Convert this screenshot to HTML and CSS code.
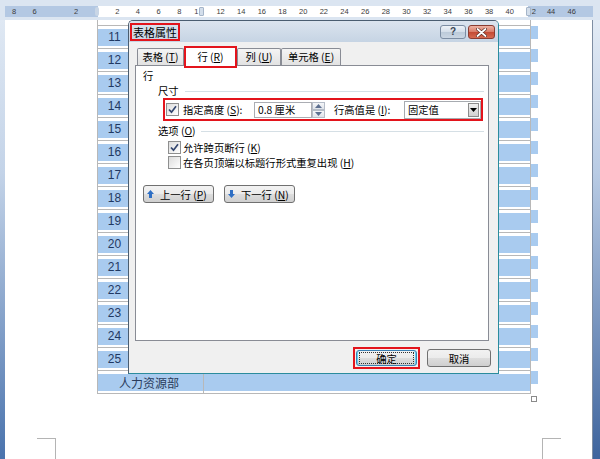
FILE: index.html
```html
<!DOCTYPE html>
<html lang="zh-CN">
<head>
<meta charset="utf-8">
<title>表格属性</title>
<link rel="stylesheet" href="styles.css">
</head>
<body>
<div class="screen">
  <div class="topbar">
    <div class="ruler">
      <span class="rn first">8</span><span class="rn">6</span><span class="rn"></span><span class="rn">2</span><span class="rn"><i class="cap"></i></span><span class="rn">2</span><span class="rn">4</span><span class="rn">6</span><span class="rn">8</span><span class="rn">1<i class="tick"></i></span><span class="rn">12</span><span class="rn">14</span><span class="rn">16</span><span class="rn">18</span><span class="rn">20</span><span class="rn">22</span><span class="rn">24</span><span class="rn">26</span><span class="rn">28</span><span class="rn">30</span><span class="rn">32</span><span class="rn">34</span><span class="rn">36</span><span class="rn">38</span><span class="rn">40</span><span class="rn"><i class="tick"></i>2</span><span class="rn">44</span><span class="rn">46</span>
    </div>
  </div>
  <div class="work">
    <div class="side side-l"></div>
    <div class="page">
      <div class="tbl">
        <div class="spacer"></div>
        <div class="row"><div class="cell c-num"><span class="band">11</span></div><div class="cell c-rest"><span class="band"></span></div><span class="eol"></span></div>
        <div class="row"><div class="cell c-num"><span class="band">12</span></div><div class="cell c-rest"><span class="band"></span></div><span class="eol"></span></div>
        <div class="row"><div class="cell c-num"><span class="band">13</span></div><div class="cell c-rest"><span class="band"></span></div><span class="eol"></span></div>
        <div class="row"><div class="cell c-num"><span class="band">14</span></div><div class="cell c-rest"><span class="band"></span></div><span class="eol"></span></div>
        <div class="row"><div class="cell c-num"><span class="band">15</span></div><div class="cell c-rest"><span class="band"></span></div><span class="eol"></span></div>
        <div class="row"><div class="cell c-num"><span class="band">16</span></div><div class="cell c-rest"><span class="band"></span></div><span class="eol"></span></div>
        <div class="row"><div class="cell c-num"><span class="band">17</span></div><div class="cell c-rest"><span class="band"></span></div><span class="eol"></span></div>
        <div class="row"><div class="cell c-num"><span class="band">18</span></div><div class="cell c-rest"><span class="band"></span></div><span class="eol"></span></div>
        <div class="row"><div class="cell c-num"><span class="band">19</span></div><div class="cell c-rest"><span class="band"></span></div><span class="eol"></span></div>
        <div class="row"><div class="cell c-num"><span class="band">20</span></div><div class="cell c-rest"><span class="band"></span></div><span class="eol"></span></div>
        <div class="row"><div class="cell c-num"><span class="band">21</span></div><div class="cell c-rest"><span class="band"></span></div><span class="eol"></span></div>
        <div class="row"><div class="cell c-num"><span class="band">22</span></div><div class="cell c-rest"><span class="band"></span></div><span class="eol"></span></div>
        <div class="row"><div class="cell c-num"><span class="band">23</span></div><div class="cell c-rest"><span class="band"></span></div><span class="eol"></span></div>
        <div class="row"><div class="cell c-num"><span class="band">24</span></div><div class="cell c-rest"><span class="band"></span></div><span class="eol"></span></div>
        <div class="row"><div class="cell c-num"><span class="band">25</span></div><div class="cell c-rest"><span class="band"></span></div><span class="eol"></span></div>
        <div class="row row-last"><div class="cell c-dept"><span class="band dept">人力资源部</span></div><div class="cell c-dept-rest"><span class="band"></span></div><span class="eol"></span></div>
      </div>
      <div class="marks"><span class="mark mark-l"></span><span class="mark mark-r"></span></div>
      <span class="handle"></span>
    </div>
    <div class="side side-r"></div>
  </div>

  <div class="dialog">
    <div class="titlebar">
      <span class="title">表格属性</span>
      <span class="tb-btns">
        <span class="tb-help">?</span>
        <span class="tb-close"><svg width="11" height="9" viewBox="0 0 11 9"><path d="M1.5 1 L9.5 8 M9.5 1 L1.5 8" stroke="#5a2a22" stroke-width="3.2" stroke-linecap="round"/><path d="M1.5 1 L9.5 8 M9.5 1 L1.5 8" stroke="#ffffff" stroke-width="1.8" stroke-linecap="round"/></svg></span>
      </span>
    </div>
    <div class="client">
      <div class="tabs">
        <span class="tab t1">表格 (<u>T</u>)</span>
        <span class="tab tab-sel">行 (<u>R</u>)</span>
        <span class="tab t3">列 (<u>U</u>)</span>
        <span class="tab t4">单元格 (<u>E</u>)</span>
      </div>
      <div class="panel">
        <div class="p-head">行</div>
        <div class="group"><span>尺寸</span><i class="rule"></i></div>
        <div class="size-row">
          <span class="chk on"><svg width="11" height="11" viewBox="0 0 11 11"><path d="M2 5.5 L4.5 8.2 L9 2.3" fill="none" stroke="#33466f" stroke-width="1.7"/></svg></span>
          <span class="lbl">指定高度 (<u>S</u>):</span>
          <span class="input">0.8 厘米</span>
          <span class="spin"><span class="sp"><svg width="7" height="4" viewBox="0 0 7 4"><path d="M0 4 L3.5 0 L7 4 Z" fill="#5c6f90"/></svg></span><span class="sp"><svg width="7" height="4" viewBox="0 0 7 4"><path d="M0 0 L3.5 4 L7 0 Z" fill="#5c6f90"/></svg></span></span>
          <span class="lbl2">行高值是 (<u>I</u>):</span>
          <span class="select"><span class="sel-text">固定值</span><span class="drop"><svg width="7" height="4" viewBox="0 0 7 4"><path d="M0 0 L3.5 4 L7 0 Z" fill="#000"/></svg></span></span>
        </div>
        <div class="group g2"><span>选项 (<u>O</u>)</span><i class="rule"></i></div>
        <div class="opt o1"><span class="chk on"><svg width="11" height="11" viewBox="0 0 11 11"><path d="M2 5.5 L4.5 8.2 L9 2.3" fill="none" stroke="#33466f" stroke-width="1.7"/></svg></span><span>允许跨页断行 (<u>K</u>)</span></div>
        <div class="opt"><span class="chk"></span><span>在各页顶端以标题行形式重复出现 (<u>H</u>)</span></div>
        <div class="nav">
          <span class="btn nav-btn"><svg width="7" height="8" viewBox="0 0 7 8"><path d="M3.5 0 L7 4 L5 4 L5 8 L2 8 L2 4 L0 4 Z" fill="#2f6fc4"/></svg><span>上一行 (<u>P</u>)</span></span>
          <span class="btn nav-btn"><svg width="7" height="8" viewBox="0 0 7 8"><path d="M3.5 8 L7 4 L5 4 L5 0 L2 0 L2 4 L0 4 Z" fill="#2f6fc4"/></svg><span>下一行 (<u>N</u>)</span></span>
        </div>
      </div>
      <div class="actions">
        <span class="ok-box"><span class="btn btn-ok"><span class="focus">确定</span></span></span>
        <span class="btn btn-cancel">取消</span>
      </div>
    </div>
  </div>
</div>
</body>
</html>
```

FILE: styles.css
```css
* { box-sizing: border-box; }
body {
  margin: 0;
  width: 600px;
  height: 459px;
  overflow: hidden;
  font-family: "Noto Sans CJK SC", "Noto Sans", sans-serif;
}
.screen {
  position: relative;
  width: 600px;
  height: 459px;
  overflow: hidden;
  background: #fff;
}

/* ruler */
.topbar {
  height: 20px;
  padding-top: 6px;
  background: #dbe5f1;
}
.ruler {
  display: flex;
  margin-left: 5px;
  width: 588px;
  height: 11px;
  background: linear-gradient(to right, #b3c8e3 0, #b3c8e3 93px, #ffffff 93px, #ffffff 523px, #b3c8e3 523px);
}
.rn {
  flex: 0 0 20.67px;
  text-align: center;
  font-family: "Liberation Sans", sans-serif;
  font-size: 7.5px;
  line-height: 11px;
  color: #3c3c3c;
  white-space: nowrap;
}
.rn.first { margin-left: -1.33px; }
.tick {
  display: inline-block;
  width: 5px;
  height: 9px;
  margin: 0 1px;
  vertical-align: -2px;
  background: #d3deeb;
  border: 1px solid #a5b5c9;
  border-radius: 1px;
}
.cap {
  display: inline-block;
  width: 4px;
  height: 9px;
  vertical-align: -2px;
  background: #c9d6e6;
  border-radius: 2px;
}

/* workspace */
.work {
  display: flex;
  height: 439px;
}
.side-l {
  width: 5px;
  background: linear-gradient(#dfe8f3 0%, #c3d3e8 35%, #4a73ad 100%);
}
.side-r {
  width: 8px;
  border-left: 1px solid #7f8ea3;
  background: linear-gradient(#e3ebf5 0%, #b8cbe4 35%, #3e649d 100%);
}
.page {
  position: relative;
  width: 587px;
  background: #fff;
}

/* table */
.tbl {
  margin-left: 92px;
  width: 441px;
  border-left: 1px solid #b8b8b8;
}
.tbl .spacer {
  height: 5px;
  width: 433px;
  border-right: 1px solid #b8b8b8;
}
.row {
  display: flex;
  height: 23px;
}
.cell {
  height: 23px;
  border-top: 1px solid #b8b8b8;
  border-right: 1px solid #b8b8b8;
  padding-top: 3px;
}
.band {
  display: block;
  height: 17px;
  background: #a9cbef;
  text-align: center;
  font-family: "Liberation Sans", sans-serif;
  font-size: 12px;
  line-height: 17px;
  color: #1f3862;
}
.band.dept {
  font-family: "Noto Sans CJK SC", sans-serif;
  font-size: 12px;
  color: #2a3c5c;
  padding-right: 3px;
}
.c-num { width: 34px; }
.c-rest { width: 399px; }
.c-dept { width: 106px; }
.c-dept-rest { width: 327px; }
.eol {
  width: 7px;
  height: 13px;
  margin-top: 1px;
  background: #a9cbef;
}
.row-last { height: 24px; }
.row-last .cell {
  height: 24px;
  border-bottom: 1px solid #b8b8b8;
}

/* page corner marks */
.marks {
  display: flex;
  margin-top: 44px;
  padding-left: 32px;
}
.mark {
  width: 19px;
  height: 22px;
  border-top: 1px solid #b4b4b4;
}
.mark-l { border-right: 1px solid #b4b4b4; }
.mark-r { margin-left: 486px; border-left: 1px solid #b4b4b4; }
.handle {
  position: absolute;
  left: 526px;
  top: 376px;
  width: 6px;
  height: 6px;
  border: 1px solid #8a8a8a;
  background: #fff;
}

/* dialog */
.dialog {
  position: absolute;
  left: 128px;
  top: 20px;
  width: 371px;
  height: 354px;
  border: 1px solid #4a5d70;
  border-right-color: #2b8c9d;
  border-bottom-color: #2b8c9d;
  border-radius: 5px 5px 0 0;
  background: #f0f0f0;
  font-size: 10.3px;
  color: #000;
}
.titlebar {
  display: flex;
  align-items: center;
  justify-content: space-between;
  height: 21px;
  padding: 0 3px 0 1px;
  background: linear-gradient(#dbe4ee, #c6d4e4);
  border-radius: 4px 4px 0 0;
}
.title {
  height: 18px;
  padding: 0 1px;
  border: 2px solid #e3141c;
  font-size: 11px;
  line-height: 14px;
  color: #000;
}
.tb-btns {
  display: flex;
  gap: 2px;
  margin-top: 1px;
}
.tb-help, .tb-close {
  display: flex;
  align-items: center;
  justify-content: center;
  height: 14px;
  border-radius: 3px;
}
.tb-help {
  width: 26px;
  border: 1px solid #7c8da3;
  background: linear-gradient(#eef3f8 0%, #d3dde9 50%, #bccad9 51%, #cad6e3 100%);
  font-family: "Liberation Sans", sans-serif;
  font-weight: bold;
  font-size: 10px;
  line-height: 12px;
  color: #3a4656;
}
.tb-close {
  width: 27px;
  border: 1px solid #8a3d32;
  background: linear-gradient(#eeb3a5 0%, #d87a66 50%, #c34a33 51%, #d66a50 100%);
}
.client {
  padding: 4px 0 0 6px;
}
.tabs {
  display: flex;
  align-items: flex-end;
  height: 19px;
  margin-left: 2px;
}
.tab {
  height: 17px;
  border: 1px solid #898c95;
  border-bottom: none;
  border-radius: 2px 2px 0 0;
  background: linear-gradient(#f4f4f4, #e2e2e2);
  text-align: center;
  line-height: 15px;
  white-space: nowrap;
}
.t1 { width: 47px; }
.t3 { width: 44px; }
.t4 { width: 60px; }
.tab-sel {
  position: relative;
  z-index: 1;
  width: 53px;
  height: 22px;
  margin-bottom: -3px;
  border: 2px solid #e3141c;
  border-radius: 0;
  background: #fff;
  line-height: 17px;
}
.panel {
  height: 276px;
  margin-right: 9px;
  border: 1px solid #898c95;
  background: #fff;
}
.p-head {
  margin-top: 3px;
  padding-left: 7px;
  line-height: 13px;
}
.group {
  display: flex;
  align-items: center;
  height: 14px;
  margin: 2px 4px 0 22px;
  line-height: 14px;
}
.group .rule {
  flex: 1;
  margin-left: 6px;
  border-top: 1px solid #d5dfe5;
}
.g2 { margin-top: 3px; }
.g2 .rule { margin-left: 5px; }
.size-row {
  display: flex;
  align-items: center;
  width: 320px;
  height: 23px;
  margin-left: 27px;
  border: 2px solid #e3141c;
}
.chk {
  display: inline-flex;
  align-items: center;
  justify-content: center;
  width: 13px;
  height: 13px;
  flex: 0 0 13px;
  border: 1px solid #8e8f8f;
  background: linear-gradient(135deg, #dcdcdc, #ffffff);
}
.size-row .chk { margin-left: 1px; }
.lbl {
  width: 71px;
  margin-left: 4px;
  white-space: nowrap;
}
.input {
  width: 58px;
  height: 16px;
  padding-left: 3px;
  border: 1px solid #abadb3;
  background: #fff;
  line-height: 14px;
  white-space: nowrap;
}
.spin {
  display: flex;
  flex-direction: column;
  width: 13px;
  height: 16px;
}
.sp {
  display: flex;
  align-items: center;
  justify-content: center;
  height: 8px;
  border: 1px solid #b5bcc7;
  background: linear-gradient(#f5f6f8, #dfe3e9);
}
.lbl2 {
  width: 70px;
  margin-left: 9px;
  white-space: nowrap;
}
.select {
  display: flex;
  align-items: center;
  width: 77px;
  height: 18px;
  padding: 1px;
  border: 1px solid #a7abb0;
  background: #fff;
}
.sel-text {
  flex: 1;
  padding-left: 2px;
  line-height: 14px;
}
.drop {
  display: flex;
  align-items: center;
  justify-content: center;
  width: 11px;
  height: 14px;
  border: 1px solid #8c8c8c;
  background: linear-gradient(#f0f0f0, #d2d2d2);
}
.opt {
  display: flex;
  align-items: center;
  height: 15px;
  margin-left: 32px;
  white-space: nowrap;
}
.opt .chk { margin-right: 2px; }
.o1 { margin-top: 2px; }
.nav {
  display: flex;
  gap: 10px;
  margin: 15px 0 0 7px;
}
.btn {
  display: inline-flex;
  align-items: center;
  justify-content: center;
  border: 1px solid #707070;
  border-radius: 3px;
  background: linear-gradient(#f2f2f2 0%, #ebebeb 50%, #dddddd 51%, #cfcfcf 100%);
  white-space: nowrap;
}
.nav-btn {
  width: 71px;
  height: 18px;
  justify-content: flex-start;
  gap: 6px;
  padding-left: 3px;
}
.actions {
  display: flex;
  align-items: center;
  justify-content: flex-end;
  gap: 7px;
  margin-top: 6px;
  padding-right: 7px;
}
.ok-box {
  display: flex;
  width: 67px;
  height: 22px;
  padding: 1px;
  border: 2px solid #e3141c;
}
.btn-ok {
  flex: 1;
  border-color: #3c7fb1;
  box-shadow: inset 1px 0 0 #5ed0f4, inset -1px 0 0 #5ed0f4;
}
.focus {
  display: flex;
  align-items: center;
  justify-content: center;
  width: 55px;
  height: 12px;
  border: 1px dotted #333;
}
.btn-cancel {
  width: 64px;
  height: 18px;
}
u { text-decoration: underline; }
```
